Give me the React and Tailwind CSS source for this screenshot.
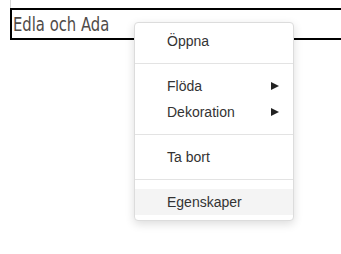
import React from 'react';

const items = [
  [{ label: 'Öppna' }],
  [{ label: 'Flöda', sub: true }, { label: 'Dekoration', sub: true }],
  [{ label: 'Ta bort' }],
  [{ label: 'Egenskaper', active: true }],
];

const Arrow = () => (
  <svg width="8" height="8" viewBox="0 0 8 8" className="fill-[#222]">
    <path d="M0 0 L8 4 L0 8 Z" />
  </svg>
);

const ContextMenu = () => (
  <div className="absolute left-[134px] top-[22px] w-[160px] rounded-[4px] border border-[#dcdcdc] bg-white py-[5px] shadow-[0_3px_10px_rgba(0,0,0,0.14)]">
    {items.map((group, gi) => (
      <div key={gi}>
        {gi > 0 && <div className="my-[9px] h-px bg-[#e3e3e3]" />}
        {group.map((it) => (
          <div
            key={it.label}
            className={`flex h-[26px] items-center justify-between pl-[32px] pr-[14px] text-[14px] text-[#333] ${it.active ? 'bg-[#f4f4f4]' : ''}`}
          >
            <span>{it.label}</span>
            {it.sub && <Arrow />}
          </div>
        ))}
      </div>
    ))}
  </div>
);

export default function App() {
  return (
    <div className="relative h-[254px] w-[341px] overflow-hidden bg-white font-['Liberation_Sans',Arial,sans-serif]">
      <div className="ml-[10px] h-[8px] w-px bg-[#d6d6d6]" />
      <div className="ml-[10px] flex h-[32px] w-[360px] items-center border-2 border-black pl-[1px]">
        <span className="inline-block origin-left scale-x-[0.74] text-[20px] leading-none text-[#4f4b48] font-['DejaVu_Sans',sans-serif]">
          Edla och Ada
        </span>
      </div>
      <ContextMenu />
    </div>
  );
}
